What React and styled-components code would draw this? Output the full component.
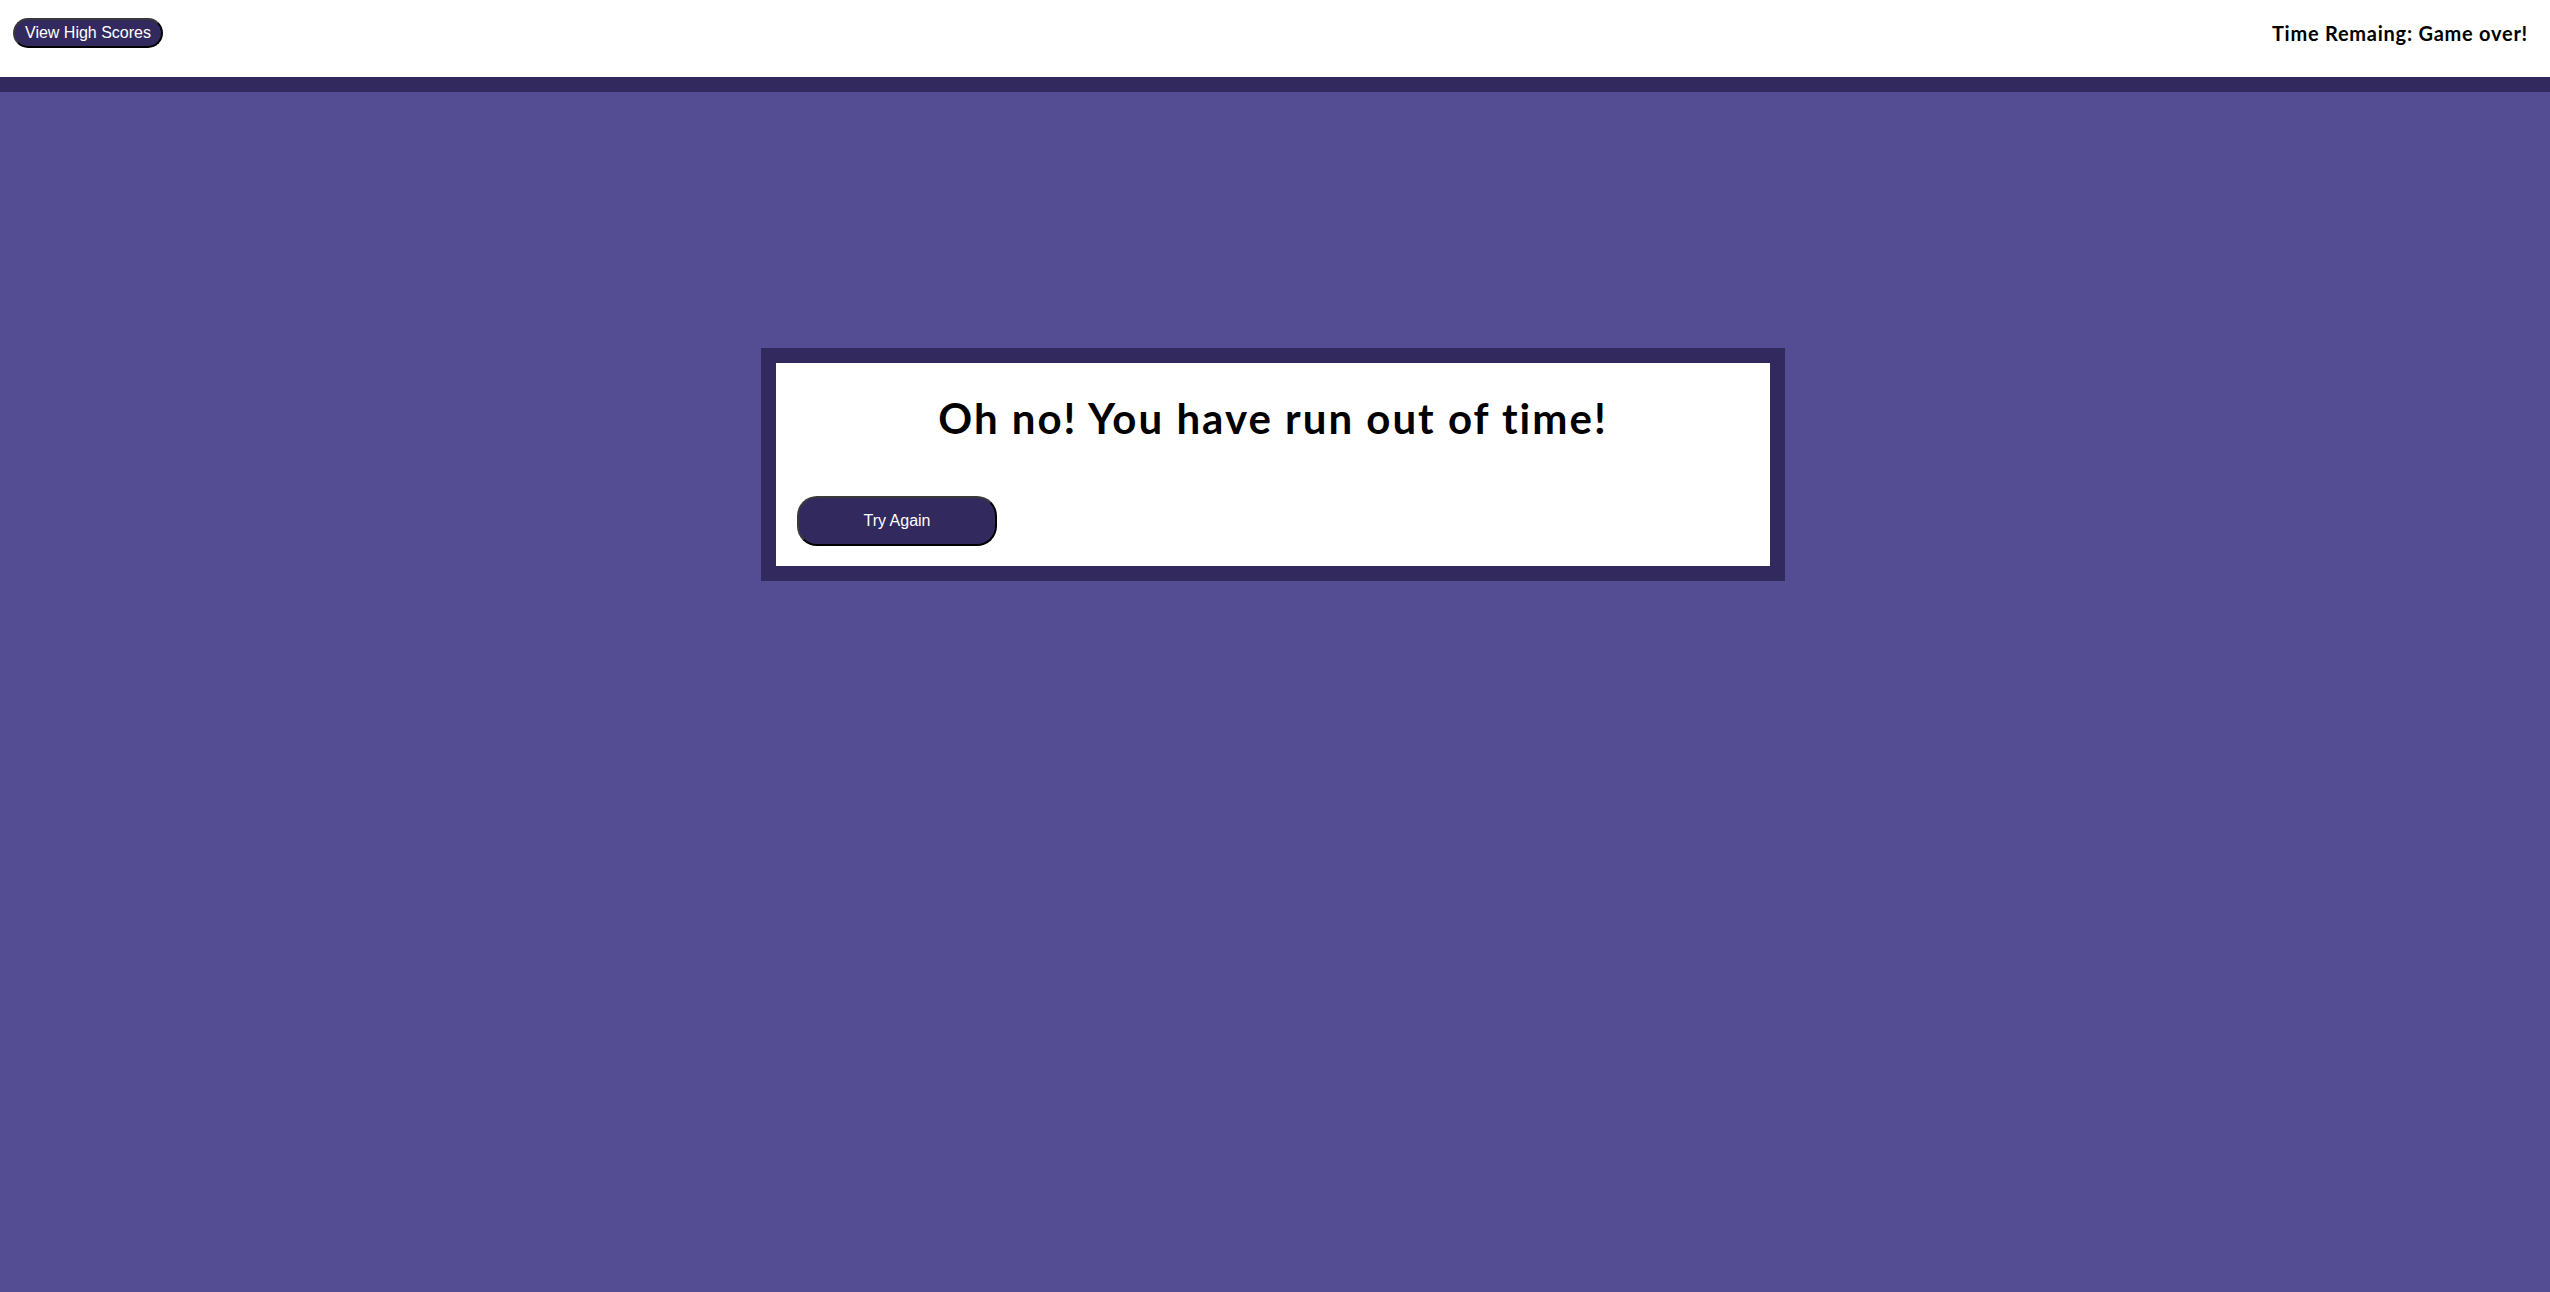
import React from "react";
import styled, { createGlobalStyle } from "styled-components";

const Global = createGlobalStyle`
  html, body { margin: 0; padding: 0; }
  body { background: #554d94; min-height: 100vh; font-family: "Liberation Sans", Arial, sans-serif; }
`;

const Header = styled.header`
  display: flex;
  justify-content: space-between;
  align-items: center;
  background: #ffffff;
  box-sizing: content-box;
  height: 30px;
  padding: 18px 22px 29px 13px;
  border-bottom: 15px solid #322a5e;
`;

const PillButton = styled.button`
  font-family: "Liberation Sans", Arial, sans-serif;
  font-size: 16px;
  color: #ffffff;
  background: #322a5e;
  border: 2px outset #3a3a3a;
  border-radius: 999px;
  height: 30px;
  padding: 0 10px;
  cursor: pointer;
`;

const Timer = styled.div`
  font-family: Lato, "Open Sans", sans-serif;
  font-weight: 700;
  font-size: 20px;
  letter-spacing: 0.75px;
  color: #000;
`;

const Main = styled.main`
  display: flex;
  justify-content: center;
  padding: 256px 4px 0 0;
`;

const Card = styled.section`
  width: 1024px;
  box-sizing: border-box;
  background: #ffffff;
  border: 15px solid #322a5e;
  padding: 30px 21px 20px;
  display: flex;
  flex-direction: column;
`;

const Title = styled.h1`
  margin: 0 0 53px;
  text-align: center;
  font-family: Lato, "Open Sans", sans-serif;
  font-weight: 700;
  font-size: 42px;
  line-height: 50px;
  letter-spacing: 2px;
  color: #000;
`;

const ActionButton = styled(PillButton)`
  align-self: flex-start;
  width: 200px;
  height: 50px;
  border-radius: 20px;
`;

export default function App() {
  return (
    <>
      <Global />
      <Header>
        <PillButton>View High Scores</PillButton>
        <Timer>Time Remaing: Game over!</Timer>
      </Header>
      <Main>
        <Card>
          <Title>Oh no! You have run out of time!</Title>
          <ActionButton>Try Again</ActionButton>
        </Card>
      </Main>
    </>
  );
}
